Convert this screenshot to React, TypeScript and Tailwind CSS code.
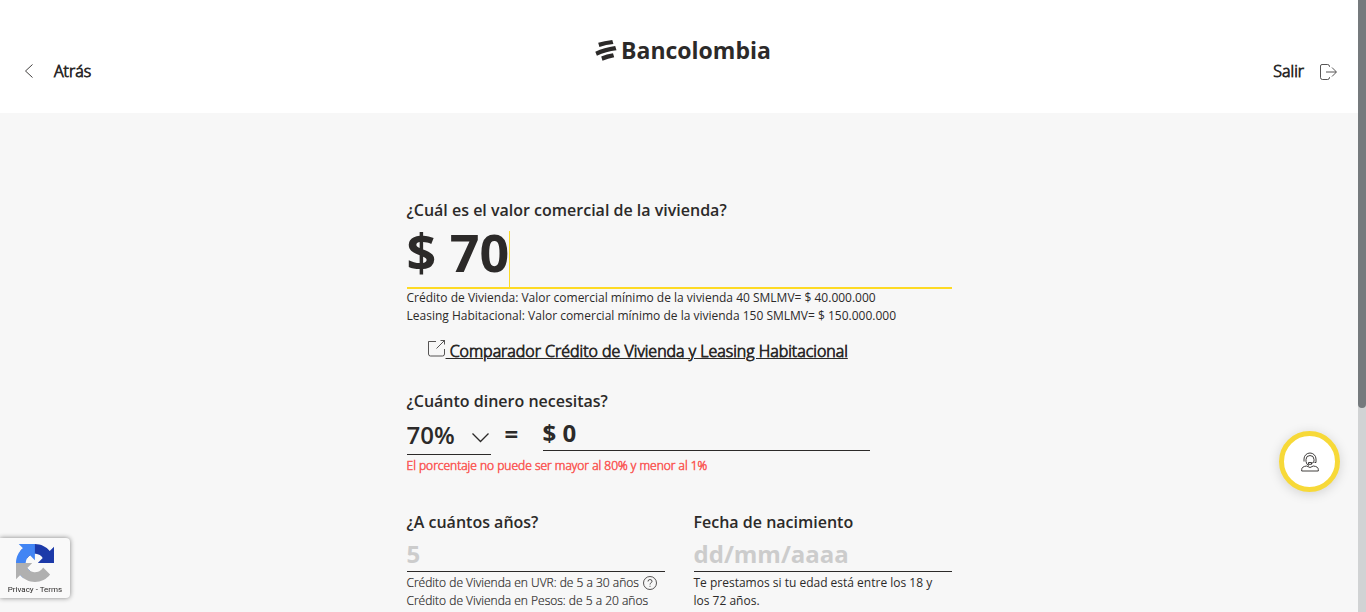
import React, { useState } from "react";

function LogoMark() {
  return (
    <svg width="22" height="22" viewBox="0 0 22 22" fill="#2c2a29" aria-hidden="true">
      <path d="M3.200 3.800Q9 1.800 17.300 0.900L18.400 5.100Q11 5.800 4.400 8.100Z" />
      <path d="M0.300 12.800Q9 8.700 20.200 7.100L21.500 11.200Q11 12.300 1.900 16.800Z" />
      <path d="M6.200 17.500Q11.500 15.300 18 14.200L19.200 18.300Q13 19.400 7.500 21.700Z" />
    </svg>
  );
}

function Recaptcha() {
  return (
    <svg width="38" height="38" viewBox="0 0 64 64" aria-hidden="true">
      <path fill="#1c3aa9" d="M64 31.955l-.033-1.370V4.687l-7.160 7.160C50.948 4.674 42.033.093 32.050.093c-10.400 0-19.622 4.960-25.458 12.640l11.736 11.860a15.550 15.550 0 0 1 4.754-5.334c2.050-1.600 4.952-2.906 8.968-2.906.485 0 .860.057 1.135.163 4.976.393 9.288 3.140 11.828 7.124l-8.307 8.307L64 31.953" />
      <path fill="#4285f4" d="M31.862.094l-1.370.033H4.594l7.160 7.160C4.580 13.147 0 22.060 0 32.046c0 10.400 4.960 19.622 12.640 25.458L24.500 45.768a15.550 15.550 0 0 1-5.334-4.754c-1.600-2.050-2.906-4.952-2.906-8.968 0-.485.057-.860.163-1.135.393-4.976 3.140-9.288 7.124-11.828l8.307 8.307L31.860.095" />
      <path fill="#b0b0b0" d="M.001 32.045l.033 1.370v25.898l7.160-7.160c5.860 7.173 14.774 11.754 24.760 11.754 10.400 0 19.622-4.960 25.458-12.640l-11.736-11.860a15.550 15.550 0 0 1-4.754 5.334c-2.050 1.600-4.952 2.906-8.968 2.906-.485 0-.860-.057-1.135-.163-4.976-.393-9.288-3.140-11.828-7.124l8.307-8.307L.001 32.046" />
    </svg>
  );
}

const heading = "block text-base leading-6 font-semibold";
const helper = "text-xs leading-[18px]";
const helperLight = "text-xs leading-[18px] font-light [-webkit-text-stroke:0.2px]";
const action = "text-base leading-6 font-light [-webkit-text-stroke:0.8px]";

export default function App() {
  const [value, setValue] = useState("$ 70");
  const [percent, setPercent] = useState("70%");
  const [amount, setAmount] = useState("$ 0");
  const [years, setYears] = useState("");
  const [birth, setBirth] = useState("");

  return (
    <div className="flex h-screen overflow-hidden bg-[#f7f7f7] font-['Open_Sans',sans-serif] text-[#2c2a29]">
      <div className="min-w-0 flex-1">
        <header className="grid h-[113px] grid-cols-3 items-start bg-white px-5">
          <button type="button" className={action + " mt-[59px] flex items-center gap-5 justify-self-start"}>
            <svg width="14" height="16" viewBox="0 0 14 16" fill="none" stroke="#2c2a29" strokeWidth="0.900" aria-hidden="true">
              <path d="M12.500 1.500L5.500 8l7 6.500" />
            </svg>
            Atrás
          </button>
          <a href="#inicio" className="mt-8 flex items-center gap-1 justify-self-center pl-2 text-[23px] leading-9 font-bold">
            <LogoMark />
            Bancolombia
          </a>
          <button type="button" className={action + " mt-[59px] flex items-center gap-4 justify-self-end"}>
            Salir
            <svg className="mt-0.5" width="18" height="16" viewBox="0 0 18 16" fill="none" stroke="#2c2a29" strokeWidth="0.800" aria-hidden="true">
              <path d="M9.500 3V2.500Q9.500.500 7.500.500H2Q.500.500.500 2v11.500Q.500 15.500 2.500 15.500h5Q9.500 15.500 9.500 13.500V13" />
              <path d="M6 8h10M12 3.500l4.500 4.500-4.500 4.500" />
            </svg>
          </button>
        </header>

        <main className="mx-auto w-full max-w-[545px] pt-[85px]">
          <section>
            <label htmlFor="valor" className={heading}>¿Cuál es el valor comercial de la vivienda?</label>
            <div className="flex h-[67px] items-end border-b-2 border-[#fdda24]">
              <input
                id="valor"
                value={value}
                size={4}
                onChange={(e) => setValue(e.target.value)}
                className="h-14 w-[103px] border-r border-[#fdda24] bg-transparent pb-4 text-[52px] leading-10 font-bold outline-none"
              />
            </div>
            <p className={helper}>Crédito de Vivienda: Valor comercial mínimo de la vivienda 40 SMLMV= $ 40.000.000</p>
            <p className={helper}>Leasing Habitacional: Valor comercial mínimo de la vivienda 150 SMLMV= $ 150.000.000</p>
            <a href="#comparador" className={action + " mt-3.5 ml-[21px] flex items-center"}>
              <svg className="mb-1" width="18" height="18" viewBox="0 0 18 18" fill="none" stroke="#2c2a29" strokeWidth="0.800" aria-hidden="true">
                <path d="M8 1.500H.500v12.500q0 2 2 2h12q2 0 2-2V9M8.500 8.500l8-8M12.500 .500h4V4.500" />
              </svg>
              <span className="whitespace-pre underline">{" Comparador Crédito de Vivienda y Leasing Habitacional"}</span>
            </a>
          </section>

          <section className="mt-[26px]">
            <label htmlFor="monto" className={heading}>¿Cuánto dinero necesitas?</label>
            <div className="flex items-start text-2xl font-bold">
              <div className="relative w-[84px]">
                <select
                  aria-label="Porcentaje"
                  value={percent}
                  onChange={(e) => setPercent(e.target.value)}
                  className="h-[42px] w-full appearance-none border-b border-[#2c2a29] bg-transparent pt-0.5 font-semibold outline-none"
                >
                  <option>70%</option>
                  <option>80%</option>
                </select>
                <svg className="pointer-events-none absolute top-[19px] right-0.5" width="17" height="12" viewBox="0 0 17 12" fill="none" stroke="#2c2a29" strokeWidth="1.300" aria-hidden="true">
                  <path d="M.500 1.500l8 8 8-8" />
                </svg>
              </div>
              <span className="w-[52px] pl-3.5 leading-[42px]">=</span>
              <input
                id="monto"
                value={amount}
                onChange={(e) => setAmount(e.target.value)}
                className="h-[38px] w-[327px] border-b border-[#2c2a29] bg-transparent pt-0.5 outline-none"
              />
            </div>
            <p className="mt-0.5 text-xs leading-[18px] font-light text-[#fa5e5b] [-webkit-text-stroke:0.6px]">El porcentaje no puede ser mayor al 80% y menor al 1%</p>
          </section>

          <section className="mt-[35px] grid grid-cols-2 gap-[29px]">
            <div>
              <label htmlFor="plazo" className={heading}>¿A cuántos años?</label>
              <input
                id="plazo"
                value={years}
                placeholder="5"
                onChange={(e) => setYears(e.target.value)}
                className="block h-[38px] w-full border-b border-[#2c2a29] bg-transparent pt-0.5 text-2xl font-bold outline-none placeholder:text-[#cccccc]"
              />
              <p className={helperLight + " mt-0.5 flex items-center gap-1"}>
                Crédito de Vivienda en UVR: de 5 a 30 años
                <button type="button" aria-label="Ayuda">
                  <svg className="block" width="14" height="14" viewBox="0 0 14 14" fill="none" stroke="#2c2a29" strokeWidth="0.800" aria-hidden="true">
                    <circle cx="7" cy="7" r="6.500" />
                    <path d="M5 5.500q0-2 2-2t2 1.800q0 1-1 1.500T7 8.500M7 9.800v1" />
                  </svg>
                </button>
              </p>
              <p className={helperLight}>Crédito de Vivienda en Pesos: de 5 a 20 años</p>
            </div>
            <div>
              <label htmlFor="fecha" className={heading}>Fecha de nacimiento</label>
              <input
                id="fecha"
                value={birth}
                placeholder="dd/mm/aaaa"
                onChange={(e) => setBirth(e.target.value)}
                className="block h-[38px] w-full border-b border-[#2c2a29] bg-transparent pt-0.5 text-2xl font-bold outline-none placeholder:text-[#cccccc]"
              />
              <p className={helper + " mt-0.5 pr-3"}>Te prestamos si tu edad está entre los 18 y los 72 años.</p>
            </div>
          </section>
        </main>
      </div>

      <div className="w-2 shrink-0 bg-[#d1d3d4]" aria-hidden="true">
        <div className="h-2/3 rounded-b bg-[#757a7d]" />
      </div>

      <button type="button" aria-label="Asesor" className="fixed right-[26px] bottom-[120px] flex size-[61px] items-center justify-center rounded-full border-[5px] border-[#f7d938] bg-white shadow-[0_2px_12px_rgba(0,0,0,0.15)]">
        <svg width="18" height="20" viewBox="0 0 18 20" fill="none" stroke="#2c2a29" strokeWidth="0.900" aria-hidden="true">
          <path d="M3 9.500V7a6 6 0 0 1 12 0v3.500h-1.500M5 9.500V7.500a4 4 0 0 1 8 0V9q0 2-2.500 2.300M5 9.500q.500 3.500 3 4M7.500 10.500h3v1.800h-3z" />
          <path d="M.700 19v-1.500q0-3 5-3.500 3.300 3 6.600 0 5 .500 5 3.500V19z" />
        </svg>
      </button>

      <aside className="fixed bottom-3.5 left-0 flex h-[60px] w-[70px] flex-col items-center rounded-r-sm bg-[#f9f9f9] pt-1.5 shadow-[0_0_5px_#808080]">
        <Recaptcha />
        <p className="mt-0.5 font-[Roboto,sans-serif] text-[8px] leading-3 whitespace-nowrap">
          <a href="#privacy">Privacy</a> - <a href="#terms">Terms</a>
        </p>
      </aside>
    </div>
  );
}
